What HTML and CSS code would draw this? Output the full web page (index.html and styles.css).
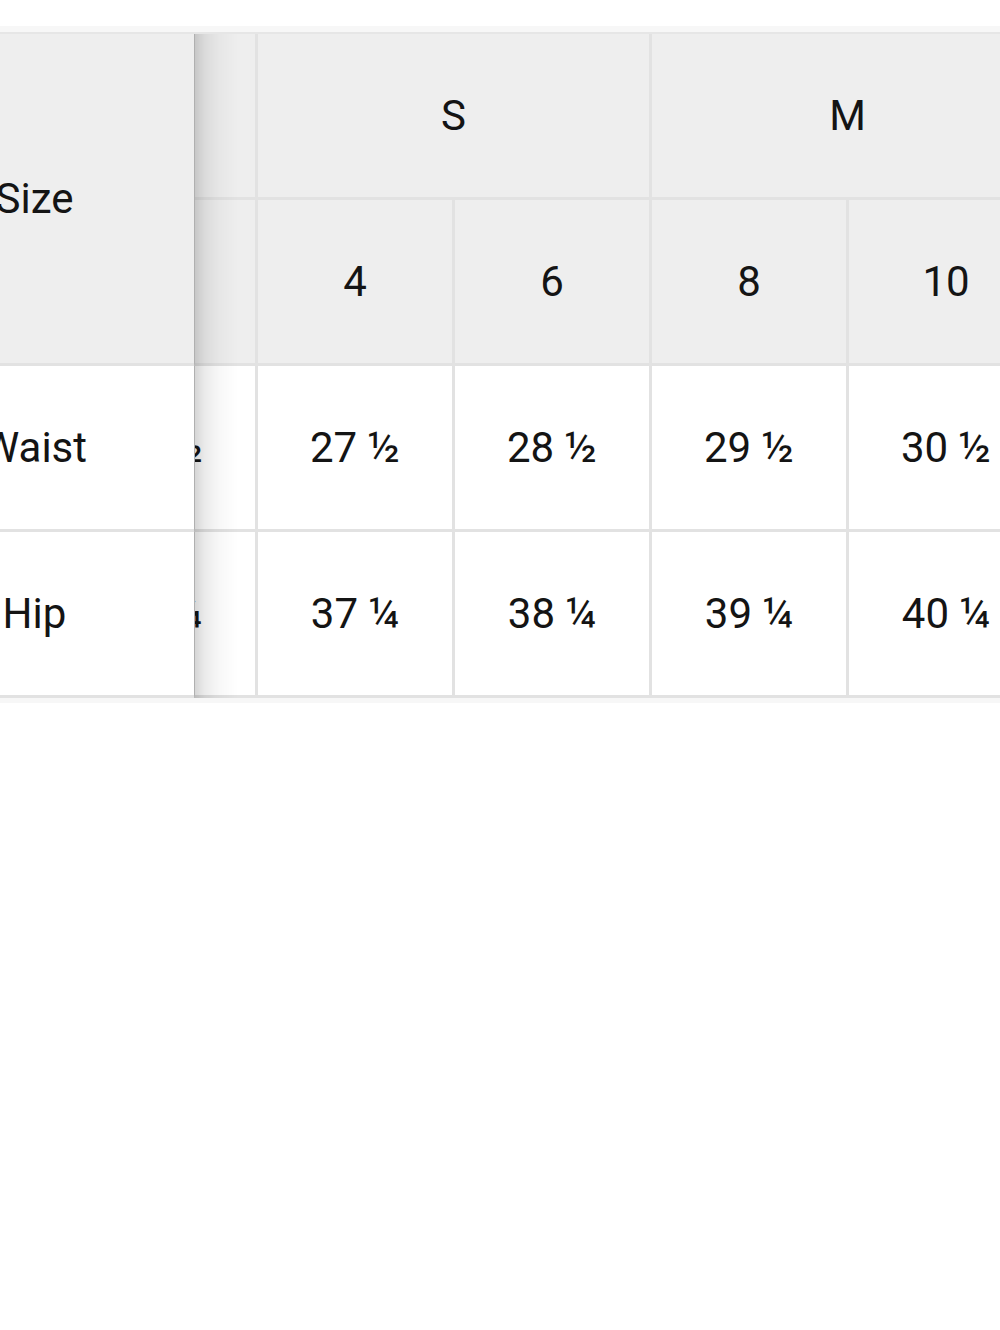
FILE: index.html
```html
<!DOCTYPE html>
<html lang="en">
<head>
<meta charset="utf-8">
<title>Size chart</title>
<link rel="stylesheet" href="styles.css">
</head>
<body>
<div class="chart">
  <div class="scroller" id="scroller">
    <table class="size-table">
      <thead>
        <tr>
          <th class="label" rowspan="2">Size</th>
          <th class="group" colspan="2">XS</th>
          <th class="group" colspan="2">S</th>
          <th class="group" colspan="2">M</th>
          <th class="group" colspan="2">L</th>
          <th class="group" colspan="2">XL</th>
        </tr>
        <tr>
          <th>0</th><th>2</th><th>4</th><th>6</th><th>8</th><th>10</th><th>12</th><th>14</th><th>16</th><th>18</th>
        </tr>
      </thead>
      <tbody>
        <tr>
          <th class="label">Waist</th>
          <td>25 ½</td><td>26 ½</td><td>27 ½</td><td>28 ½</td><td>29 ½</td><td>30 ½</td><td>31 ½</td><td>32 ½</td><td>34</td><td>35 ½</td>
        </tr>
        <tr>
          <th class="label">Hip</th>
          <td>35 ¼</td><td>36 ¼</td><td>37 ¼</td><td>38 ¼</td><td>39 ¼</td><td>40 ¼</td><td>41 ¼</td><td>42 ¼</td><td>43 ¾</td><td>45 ¼</td>
        </tr>
      </tbody>
    </table>
  </div>
</div>
<script src="script.js"></script>
</body>
</html>
```

FILE: styles.css
```css
html, body {
  margin: 0;
  padding: 0;
  background: #ffffff;
  overflow-x: hidden;
}

body {
  font-family: Roboto, "Liberation Sans", Arial, sans-serif;
  color: #141414;
}

.chart {
  margin-top: 26px;
  margin-left: -125px;
  width: calc(100% + 125px);
  background: #f7f7f7;
  padding: 6px 0 5px;
}

.scroller {
  overflow-x: auto;
  scrollbar-width: none;
}

.scroller::-webkit-scrollbar {
  display: none;
}

.size-table {
  border-collapse: separate;
  border-spacing: 0;
  width: 2290px;
  border-top: 2px solid #e6e6e6;
  background: #ffffff;
}

.size-table th,
.size-table td {
  box-sizing: border-box;
  width: 197px;
  height: 166px;
  padding: 0;
  border-right: 3px solid #e2e2e2;
  border-bottom: 3px solid #e2e2e2;
  text-align: center;
  vertical-align: middle;
  font-size: 42px;
  font-weight: 400;
  line-height: 1;
  white-space: nowrap;
}

.size-table thead th {
  background: #eeeeee;
}

.size-table tbody td {
  background: #ffffff;
}

.size-table .label {
  position: sticky;
  left: 0;
  z-index: 2;
  width: 320px;
  border-right: 1px solid #d2d2d2;
  background: #ffffff;
}

.size-table thead .label {
  background: #eeeeee;
}

.size-table .label::after {
  content: "";
  position: absolute;
  top: 0;
  bottom: -3px;
  left: 100%;
  width: 44px;
  background: linear-gradient(to right, rgba(0, 0, 0, 0.17), rgba(0, 0, 0, 0.08) 25%, rgba(0, 0, 0, 0.03) 55%, rgba(0, 0, 0, 0));
  pointer-events: none;
}
```

FILE: script.js
```js
document.getElementById('scroller').scrollLeft = 331;
```
